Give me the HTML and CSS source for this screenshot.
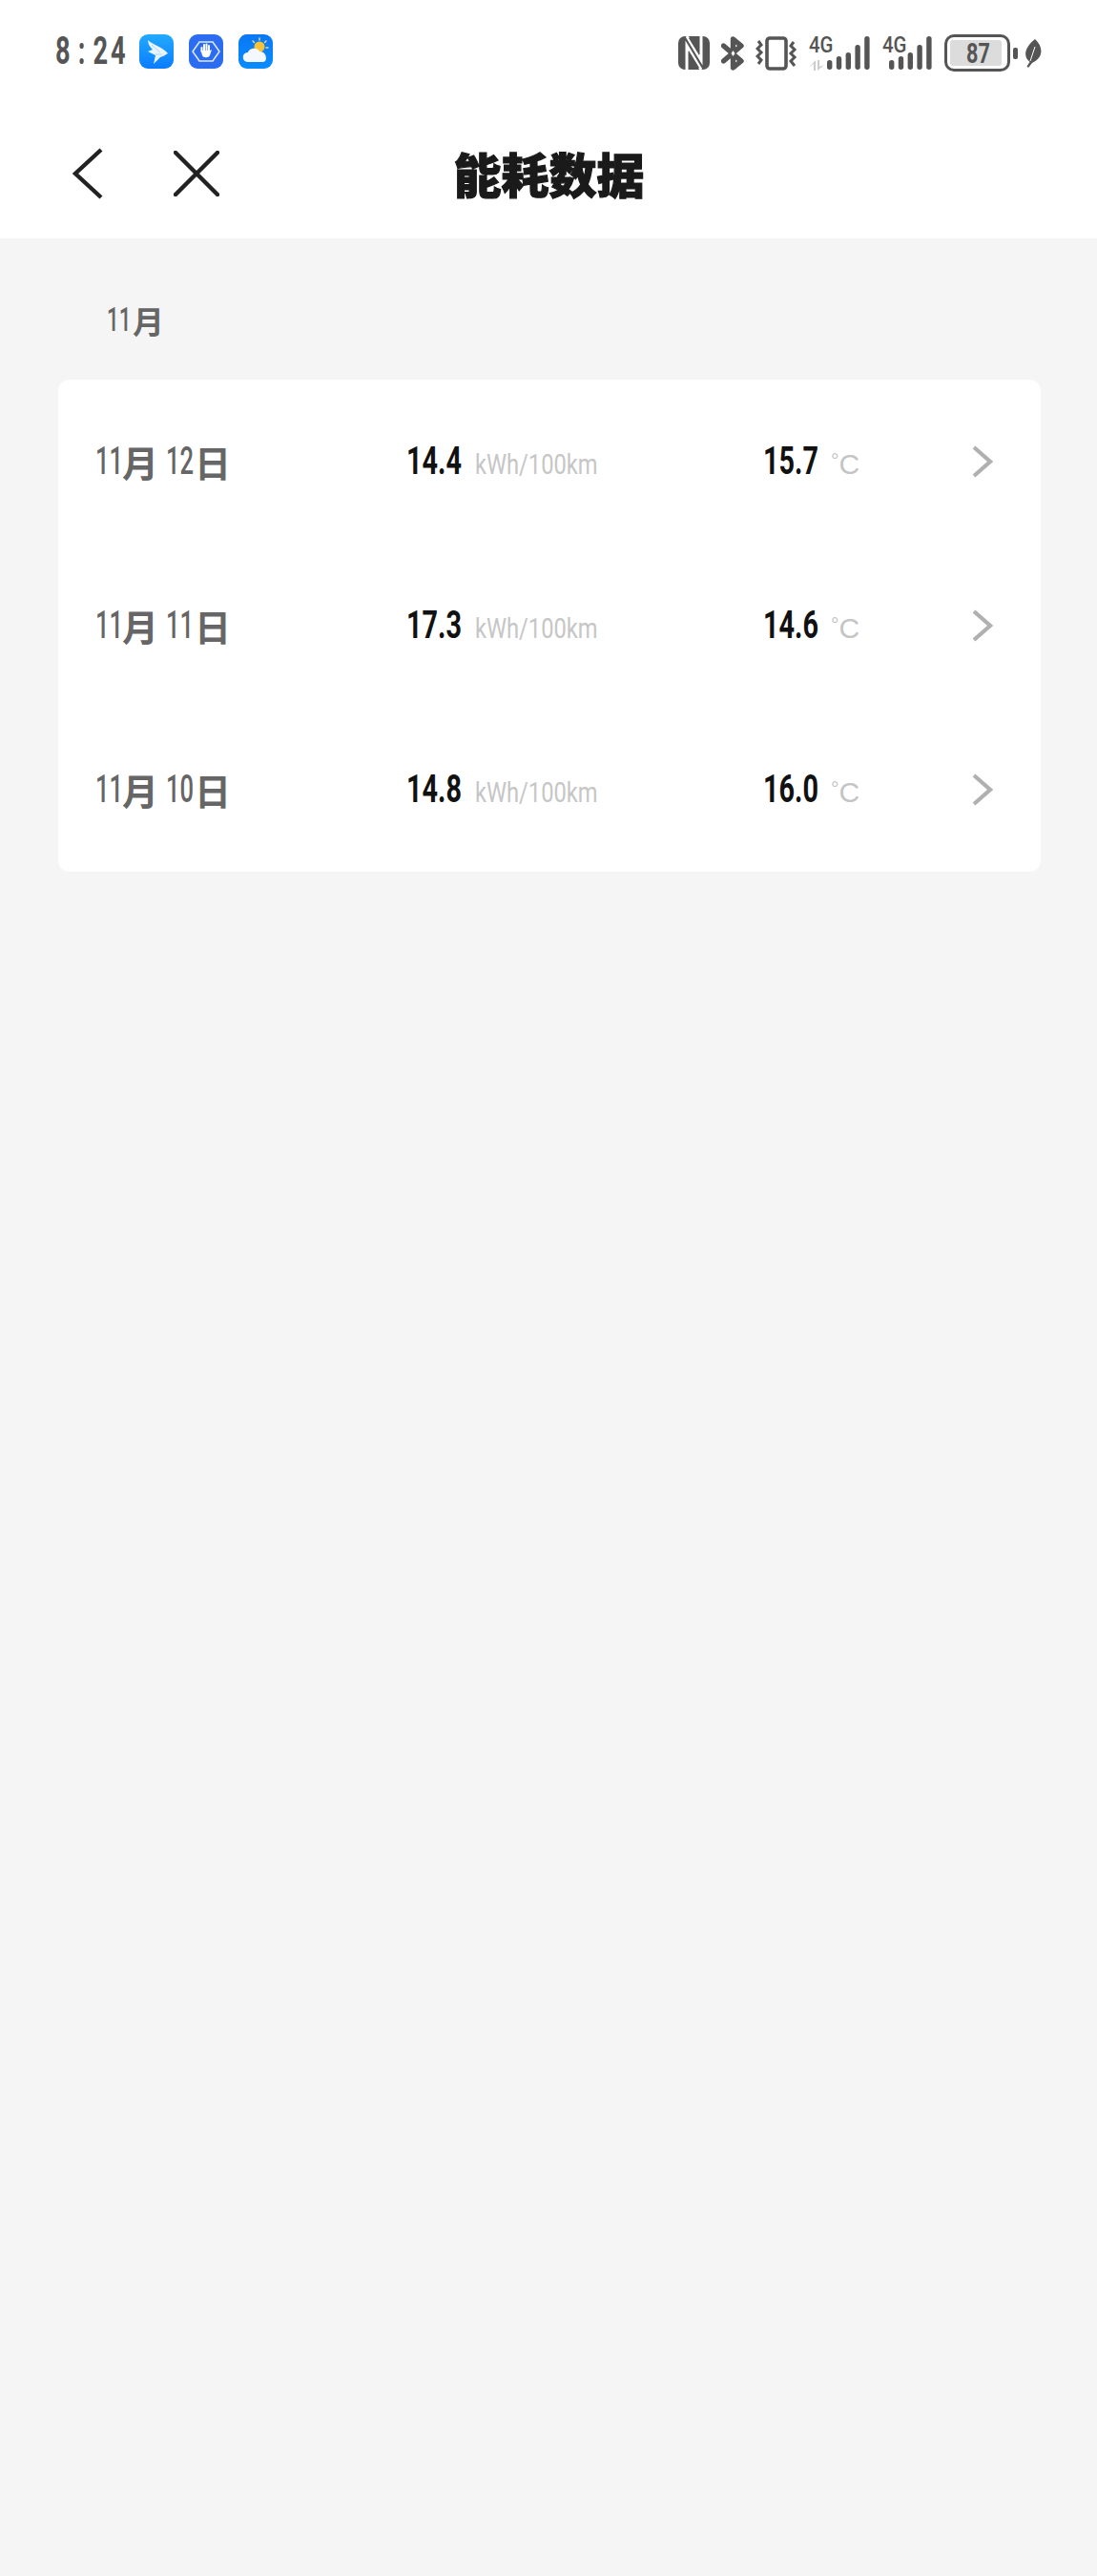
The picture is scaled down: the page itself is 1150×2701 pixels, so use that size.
FILE: index.html
```html
<!DOCTYPE html>
<html lang="zh">
<head>
<meta charset="utf-8">
<title>能耗数据</title>
<link rel="stylesheet" href="styles.css">
</head>
<body>
<header class="top">
  <div class="status">
    <div class="status-left">
      <div class="time"><span>8</span><span class="colon">:</span><span>24</span></div>
      <svg class="app" viewBox="0 0 36 36"><defs><linearGradient id="g1" x1="0" y1="0" x2="0" y2="1"><stop offset="0" stop-color="#22aaff"/><stop offset="1" stop-color="#0a7cff"/></linearGradient></defs><rect width="36" height="36" rx="9" fill="url(#g1)"/><path d="M9 6 C14 11 24 13 30 20 C27 22 25 23 22 24 L15 31 L17 22 L9 18 L14 16 C11 13 9 10 9 6Z" fill="#e8f4ff"/><path d="M13 11 L22 19 M17 21 L24 21" stroke="#9fd4ff" stroke-width=".8" fill="none"/></svg>
      <svg class="app" viewBox="0 0 36 36"><rect width="36" height="36" rx="9" fill="#2c6cf0"/><path d="M11 8 H25 L32 18 L25 28 H11 L4 18Z" fill="none" stroke="#dce8ff" stroke-width="1.6"/><path d="M13.5 18 V14 M16 17 V11 M18.5 17 V10.5 M21 17 V12" fill="none" stroke="#fff" stroke-width="2" stroke-linecap="round"/><path d="M12.5 17 H22 L24 16 L22 22 C21 25 15 25 14 22Z" fill="#fff"/></svg>
      <svg class="app" viewBox="0 0 36 36"><defs><linearGradient id="g3" x1="0" y1="0" x2="0" y2="1"><stop offset="0" stop-color="#0a78f5"/><stop offset="1" stop-color="#0a8cff"/></linearGradient></defs><rect width="36" height="36" rx="9" fill="url(#g3)"/><circle cx="22" cy="13" r="5.5" fill="#f8c334"/><path d="M22 4 V6 M29 7 L27.5 8.5 M31 14 H29 M15 7 L16.5 8.5" stroke="#f3dc8c" stroke-width="1.4" stroke-linecap="round"/><path d="M10 29 C3 29 3 19 10 19 C11 14 20 13 22 18 C29 17 32 29 25 29Z" fill="#f4f8fc"/></svg>
    </div>
    <div class="status-right">
      <svg class="nfc" viewBox="0 0 33 35"><rect width="33" height="35" rx="7" fill="#555"/><path d="M9 35 V10 L24 35 M24 0 V25 L9 0" fill="none" stroke="#fff" stroke-width="3"/><path d="M11 15 L22 33 H11Z M22 20 L11 2 H22Z" fill="#555"/></svg>
      <svg class="bt" viewBox="0 0 25 36"><path d="M2.5 10 L21 26 L12.5 33 V3 L21 10 L2.5 26" fill="none" stroke="#555" stroke-width="5.4" stroke-linejoin="round" stroke-linecap="round"/><path d="M12.5 15 L14.5 18 L12.5 21 L10.5 18Z" fill="#fff"/></svg>
      <svg class="vib" viewBox="0 0 44 36"><rect x="12" y="2" width="20" height="32" rx="3" fill="none" stroke="#555" stroke-width="3.6"/><path d="M3 5 L6 9 L2 13 L6 17 L2 21 L6 25 L3 29 M40 6 L37 10 L41 14 L37 18 L41 22 L37 26 L41 31" fill="none" stroke="#555" stroke-width="3"/></svg>
      <div class="net">
        <span class="g4">4G</span>
        <svg class="updown" viewBox="0 0 16 11"><path d="M7 0 V11 H5 V4 L0 8Z M9 0 V11 L16 5 L11 7 V0Z" fill="#ccc"/></svg>
        <svg class="bars" viewBox="0 0 45 36"><rect x="0" y="25" width="5.4" height="10" rx="2.7"/><rect x="9.8" y="21" width="5.4" height="14" rx="2.7"/><rect x="19.6" y="17" width="5.4" height="18" rx="2.7"/><rect x="29.4" y="9" width="5.4" height="26" rx="2.7"/><rect x="39.2" y="0" width="5.4" height="35" rx="2.7"/></svg>
      </div>
      <div class="net net2">
        <span class="g4">4G</span>
        <svg class="bars" viewBox="0 0 45 36"><rect x="0" y="25" width="5.4" height="10" rx="2.7"/><rect x="9.8" y="21" width="5.4" height="14" rx="2.7"/><rect x="19.6" y="17" width="5.4" height="18" rx="2.7"/><rect x="29.4" y="9" width="5.4" height="26" rx="2.7"/><rect x="39.2" y="0" width="5.4" height="35" rx="2.7"/></svg>
      </div>
      <div class="battery"><div class="charge"></div><span class="pct">87</span></div>
      <div class="nub"></div>
      <svg class="leaf" viewBox="0 0 19 30"><path d="M12 0 C21 8 21 20 9 25 L5 30 L3.5 28.5 L6.5 24 C-2 17 3 7 12 0Z" fill="#555"/><path d="M7 23 L12 8" stroke="#fff" stroke-width="1" fill="none"/></svg>
    </div>
  </div>
  <nav class="nav">
    <svg class="back" viewBox="0 0 34 54"><path d="M30 2 L3 27 L30 52" fill="none" stroke="#222" stroke-width="4.4"/></svg>
    <svg class="close" viewBox="0 0 48 48"><path d="M2 2 L46 46 M46 2 L2 46" fill="none" stroke="#222" stroke-width="4.5" stroke-linecap="round"/></svg>
    <h1 class="title">能耗数据</h1>
  </nav>
</header>
<main class="content">
  <div class="month"><span class="d">11</span><span class="cn">月</span></div>
  <section class="card">
    <div class="row">
      <div class="date"><span class="d">11</span><span class="cn">月</span><span class="d">12</span><span class="cn ri">日</span></div>
      <div class="energy"><span class="val">14.4</span><span class="unit">kWh/100km</span></div>
      <div class="temp"><span class="val">15.7</span><span class="deg"><span class="o">°</span>C</span></div>
      <svg class="arrow" viewBox="0 0 22 34"><path d="M2 2 L19 17 L2 32" fill="none" stroke="#b0b0b0" stroke-width="4.2"/></svg>
    </div>
    <div class="row">
      <div class="date"><span class="d">11</span><span class="cn">月</span><span class="d">11</span><span class="cn ri">日</span></div>
      <div class="energy"><span class="val">17.3</span><span class="unit">kWh/100km</span></div>
      <div class="temp"><span class="val">14.6</span><span class="deg"><span class="o">°</span>C</span></div>
      <svg class="arrow" viewBox="0 0 22 34"><path d="M2 2 L19 17 L2 32" fill="none" stroke="#b0b0b0" stroke-width="4.2"/></svg>
    </div>
    <div class="row">
      <div class="date"><span class="d">11</span><span class="cn">月</span><span class="d">10</span><span class="cn ri">日</span></div>
      <div class="energy"><span class="val">14.8</span><span class="unit">kWh/100km</span></div>
      <div class="temp"><span class="val">16.0</span><span class="deg"><span class="o">°</span>C</span></div>
      <svg class="arrow" viewBox="0 0 22 34"><path d="M2 2 L19 17 L2 32" fill="none" stroke="#b0b0b0" stroke-width="4.2"/></svg>
    </div>
  </section>
</main>
</body>
</html>
```
FILE: styles.css
```css
* { box-sizing: border-box; }
html, body { margin: 0; padding: 0; }
body {
  min-height: 2701px;
  background: #f5f5f5;
  font-family: Roboto, "Noto Sans CJK SC", sans-serif;
  color: #111;
  overflow: hidden;
}
.top { background: #fff; height: 250px; }
.status {
  height: 110px;
  display: flex;
  justify-content: space-between;
  align-items: flex-start;
  padding: 36px 58px 0 58px;
}
.status-left { display: flex; align-items: center; }
.time {
  width: 88px;
  font-size: 40px;
  line-height: 36px;
  letter-spacing: 4px;
  color: #555;
  display: flex;
  gap: 8px;
  font-weight: 700;
  white-space: nowrap;
  transform: scaleX(.68);
  transform-origin: left center;
}
.app { width: 36px; height: 36px; margin-right: 16px; flex: none; }
.status-right { display: flex; align-items: center; height: 39px; }
.nfc { width: 33px; height: 35px; margin-right: 12px; }
.bt { width: 25px; height: 36px; margin-right: 11px; }
.vib { width: 44px; height: 36px; margin-right: 12px; }
.net {
  position: relative;
  width: 64px;
  height: 36px;
  margin-right: 13px;
}
.net2 { width: 52px; }
.g4 {
  position: absolute;
  left: 0;
  top: -2px;
  font-weight: 500;
  font-size: 24px;
  line-height: 22px;
  color: #555;
  transform: scaleX(.85);
  transform-origin: left center;
}
.updown { position: absolute; left: 0; top: 25px; width: 16px; height: 11px; }
.bars { position: absolute; right: 0; top: 0; width: 45px; height: 36px; fill: #555; }
.battery {
  position: relative;
  width: 69px;
  height: 39px;
  border: 3px solid #555;
  border-radius: 10px;
  padding: 3px;
  margin-right: 3px;
}
.charge { width: 54px; height: 27px; background: #dcdcdc; border-radius: 3px; }
.pct {
  position: absolute;
  left: 20px;
  top: 0;
  font-size: 30px;
  line-height: 33px;
  font-weight: 700;
  color: #555;
  transform: scaleX(.72);
  transform-origin: left center;
}
.nub { width: 5px; height: 12px; background: #555; border-radius: 2px; margin-right: 6px; }
.leaf { width: 19px; height: 30px; }
.nav {
  position: relative;
  height: 140px;
  display: flex;
  align-items: center;
  padding: 4px 0 0 76px;
}
.back { width: 34px; height: 54px; margin-right: 72px; }
.close { width: 48px; height: 48px; }
.title {
  position: absolute;
  left: 0;
  right: 0;
  top: 37px;
  margin: 0;
  padding-left: 1px;
  text-align: center;
  font-family: "Noto Sans CJK SC", sans-serif;
  font-weight: 900;
  font-size: 50px;
  line-height: 68px;
  color: #1a1a1a;
  -webkit-text-stroke: 1.2px #1a1a1a;
}
.content { padding: 0 59px 0 61px; }
.month {
  height: 148px;
  padding: 64px 0 0 51px;
  display: flex;
  align-items: flex-start;
  color: #666;
}
.month .d { font-size: 35px; line-height: 44px; width: 27px; }
.month .cn { font-size: 33px; line-height: 44px; margin: 0; }
.card { background: #fff; border-radius: 12px; }
.row {
  height: 172px;
  display: grid;
  grid-template-columns: 39px 326px 374px 219px 24px;
  align-items: center;
}
.date {
  grid-column: 2;
  display: flex;
  align-items: center;
  color: #666;
  height: 48px;
}
.d {
  display: inline-block;
  width: 28px;
  font-size: 40px;
  line-height: 40px;
  font-weight: 500;
  white-space: nowrap;
  transform: scaleX(.64);
  transform-origin: left center;
}
.cn {
  font-family: "Noto Sans CJK SC", sans-serif;
  font-size: 38px;
  line-height: 48px;
  font-weight: 700;
  margin-right: 8px;
}
.ri { margin-left: 2px; margin-right: 0; }
.energy, .temp { display: flex; align-items: baseline; }
.val {
  display: inline-block;
  width: 58px;
  font-size: 40px;
  line-height: 44px;
  font-weight: 700;
  color: #111;
  white-space: nowrap;
  transform: scaleX(.72);
  transform-origin: left center;
}
.unit {
  display: inline-block;
  width: 130px;
  margin-left: 14px;
  font-weight: 400;
  font-size: 30px;
  color: #c6c6c6;
  white-space: nowrap;
  transform: scaleX(.79);
  transform-origin: left center;
}
.deg {
  margin-left: 13px;
  font-family: "Liberation Sans", sans-serif;
  font-size: 30px;
  color: #c4c4c4;
}
.o { font-size: 21px; position: relative; top: -7px; }
.arrow { width: 22px; height: 34px; }
```
